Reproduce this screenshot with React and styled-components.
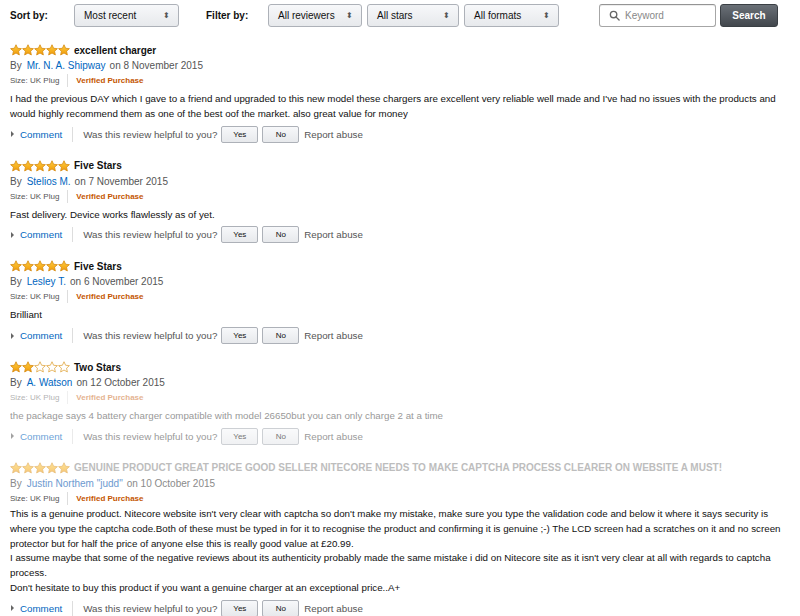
import React from "react";
import styled, { createGlobalStyle } from "styled-components";

const GlobalStyle = createGlobalStyle`
  body {
    margin: 0;
    background: #fff;
    font-family: "Liberation Sans", Arial, sans-serif;
    color: #111;
  }
`;

const Page = styled.div`
  width: 800px;
  padding: 4px 10px 0 10px;
  box-sizing: border-box;
`;

const Toolbar = styled.div`
  display: flex;
  align-items: center;
  height: 23px;
  padding-right: 5px;
`;

const Label = styled.span`
  font-size: 10px;
  font-weight: bold;
  color: #111;
  width: ${(p) => p.w}px;
`;

const Select = styled.div`
  box-sizing: border-box;
  width: ${(p) => p.w}px;
  margin-right: ${(p) => p.mr || 0}px;
  height: 23px;
  display: flex;
  align-items: center;
  justify-content: space-between;
  padding: 0 8px 0 9px;
  border: 1px solid #adb1b8;
  border-radius: 3px;
  background: linear-gradient(#f7f8fa, #e7e9ec);
  font-size: 10px;
  color: #111;
`;

const Arrows = styled.span`
  font-size: 8px;
  color: #555;
  line-height: 1;
`;

const Spacer = styled.div`
  flex: 1;
`;

const Keyword = styled.div`
  box-sizing: border-box;
  width: 117px;
  height: 23px;
  display: flex;
  align-items: center;
  gap: 5px;
  padding-left: 9px;
  border: 1px solid #a6a6a6;
  border-top-color: #949494;
  border-radius: 3px;
  box-shadow: inset 0 1px 0 rgba(0, 0, 0, 0.07);
  font-size: 10px;
  color: #888;
`;

const SearchButton = styled.div`
  box-sizing: border-box;
  width: 58px;
  height: 23px;
  margin-left: 4px;
  margin-right: 7px;
  display: flex;
  align-items: center;
  justify-content: center;
  border: 1px solid #3a3f44;
  border-radius: 3px;
  background: linear-gradient(#6a7077, #42474d);
  color: #fff;
  font-size: 10px;
  font-weight: bold;
`;

const Review = styled.div`
  margin-top: 15px;
`;

const TitleRow = styled.div`
  display: flex;
  align-items: center;
  gap: 4px;
  height: 16px;
  opacity: ${(p) => (p.faded ? 0.55 : 1)};
`;

const Stars = styled.span`
  display: flex;
`;

const Title = styled.span`
  font-size: 10px;
  font-weight: bold;
  color: ${(p) => (p.faded ? "#888" : "#111")};
`;

const ByLine = styled.div`
  font-size: 10px;
  line-height: 15px;
  color: ${(p) => (p.faded ? "#8a8a8a" : "#555")};
`;

const Author = styled.a`
  color: ${(p) => (p.faded ? "#6d9ad0" : "#0066c0")};
  text-decoration: none;
  margin: 0 4px 0 5px;
`;

const Meta = styled.div`
  display: flex;
  align-items: center;
  font-size: 8px;
  line-height: 15px;
  color: #555;
  opacity: ${(p) => (p.faded ? 0.45 : 1)};
`;

const Divider = styled.span`
  width: 1px;
  height: ${(p) => p.h || 13}px;
  background: #ddd;
  margin: 0 ${(p) => p.m || 10}px;
`;

const Verified = styled.span`
  color: #c45500;
  font-weight: bold;
`;

const Body = styled.div`
  margin-top: ${(p) => p.mt}px;
  font-size: 9.75px;
  line-height: 14.8px;
  color: #111;
  opacity: ${(p) => (p.faded ? 0.45 : 1)};
`;

const Actions = styled.div`
  margin-top: 4px;
  display: flex;
  align-items: center;
  height: 17px;
  font-size: 9.75px;
  color: #555;
  opacity: ${(p) => (p.faded ? 0.6 : 1)};
`;

const Caret = styled.span`
  display: inline-block;
  width: 0;
  height: 0;
  border-top: 3px solid transparent;
  border-bottom: 3px solid transparent;
  border-left: 3px solid #666;
  margin: 0 6px 0 1px;
`;

const Link = styled.a`
  color: #0066c0;
  text-decoration: none;
`;

const VoteButton = styled.span`
  box-sizing: border-box;
  width: 37px;
  height: 17px;
  margin-left: ${(p) => p.ml || 0}px;
  display: flex;
  align-items: center;
  justify-content: center;
  border: 1px solid #adb1b8;
  border-radius: 2px;
  background: linear-gradient(#f7f8fa, #e7e9ec);
  font-size: 8px;
  color: #111;
`;

const Report = styled.span`
  margin-left: 5px;
`;

const Star = ({ fill }) => (
  <svg width="12" height="12" viewBox="0 0 24 24">
    <defs>
      <linearGradient id="sg" x1="0" y1="0" x2="0" y2="1">
        <stop offset="0" stopColor="#ffce3d" />
        <stop offset="1" stopColor="#f09a0b" />
      </linearGradient>
    </defs>
    <path
      d="M12 1.5l3.2 7 7.6.8-5.7 5.1 1.6 7.5L12 18l-6.7 3.9 1.6-7.5L1.2 9.3l7.6-.8z"
      fill={fill ? "url(#sg)" : "#fff"}
      stroke={fill ? "#d68a10" : "#e0a640"}
      strokeWidth="1.6"
      strokeLinejoin="round"
    />
  </svg>
);

const StarRating = ({ n }) => (
  <Stars>
    {[0, 1, 2, 3, 4].map((i) => (
      <Star key={i} fill={i < n} />
    ))}
  </Stars>
);

const reviews = [
  {
    stars: 5,
    title: "excellent charger",
    author: "Mr. N. A. Shipway",
    date: "8 November 2015",
    body: [
      "I had the previous DAY which I gave to a friend and upgraded to this new model these chargers are excellent very reliable well made and I've had no issues with the products and would highly recommend them as one of the best oof the market. also great value for money",
    ],
  },
  {
    stars: 5,
    title: "Five Stars",
    author: "Stelios M.",
    date: "7 November 2015",
    body: ["Fast delivery. Device works flawlessly as of yet."],
  },
  {
    stars: 5,
    title: "Five Stars",
    author: "Lesley T.",
    date: "6 November 2015",
    body: ["Brilliant"],
  },
  {
    stars: 2,
    title: "Two Stars",
    author: "A. Watson",
    date: "12 October 2015",
    faded: true,
    body: [
      "the package says 4 battery charger compatible with model 26650but you can only charge 2 at a time",
    ],
  },
  {
    stars: 5,
    title:
      "GENUINE PRODUCT GREAT PRICE GOOD SELLER NITECORE NEEDS TO MAKE CAPTCHA PROCESS CLEARER ON WEBSITE A MUST!",
    author: 'Justin Northem "judd"',
    date: "10 October 2015",
    headFaded: true,
    tight: true,
    body: [
      "This is a genuine product. Nitecore website isn't very clear with captcha so don't make my mistake, make sure you type the validation code and below it where it says security is where you type the captcha code.Both of these must be typed in for it to recognise the product and confirming it is genuine ;-) The LCD screen had a scratches on it and no screen protector but for half the price of anyone else this is really good value at £20.99.",
      "I assume maybe that some of the negative reviews about its authenticity probably made the same mistake i did on Nitecore site as it isn't very clear at all with regards to captcha process.",
      "Don't hesitate to buy this product if you want a genuine charger at an exceptional price..A+",
    ],
  },
];

const ReviewItem = ({ r }) => (
  <Review>
    <TitleRow faded={r.headFaded}>
      <StarRating n={r.stars} />
      <Title faded={r.headFaded}>{r.title}</Title>
    </TitleRow>
    <ByLine faded={r.headFaded}>
      By<Author faded={r.headFaded}>{r.author}</Author>on {r.date}
    </ByLine>
    <Meta faded={r.faded}>
      Size: UK Plug
      <Divider m={8} />
      <Verified>Verified Purchase</Verified>
    </Meta>
    <Body faded={r.faded} mt={r.tight ? 1 : 4}>
      {r.body.map((p, i) => (
        <div key={i}>{p}</div>
      ))}
    </Body>
    <Actions faded={r.faded}>
      <Caret />
      <Link>Comment</Link>
      <Divider h={15} m={10} />
      Was this review helpful to you?
      <VoteButton ml={4}>Yes</VoteButton>
      <VoteButton ml={4}>No</VoteButton>
      <Report>Report abuse</Report>
    </Actions>
  </Review>
);

const App = () => (
  <>
    <GlobalStyle />
    <Page>
      <Toolbar>
        <Label w={64}>Sort by:</Label>
        <Select w={105} mr={27}>
          Most recent <Arrows>⬍</Arrows>
        </Select>
        <Label w={62}>Filter by:</Label>
        <Select w={94} mr={5}>
          All reviewers <Arrows>⬍</Arrows>
        </Select>
        <Select w={92} mr={5}>
          All stars <Arrows>⬍</Arrows>
        </Select>
        <Select w={95}>
          All formats <Arrows>⬍</Arrows>
        </Select>
        <Spacer />
        <Keyword>
          <svg width="11" height="11" viewBox="0 0 24 24" fill="none" stroke="#666" strokeWidth="3">
            <circle cx="10" cy="10" r="7" />
            <path d="M15 15l7 7" strokeLinecap="round" />
          </svg>
          Keyword
        </Keyword>
        <SearchButton>Search</SearchButton>
      </Toolbar>
      {reviews.map((r, i) => (
        <ReviewItem key={i} r={r} />
      ))}
    </Page>
  </>
);

export default App;
